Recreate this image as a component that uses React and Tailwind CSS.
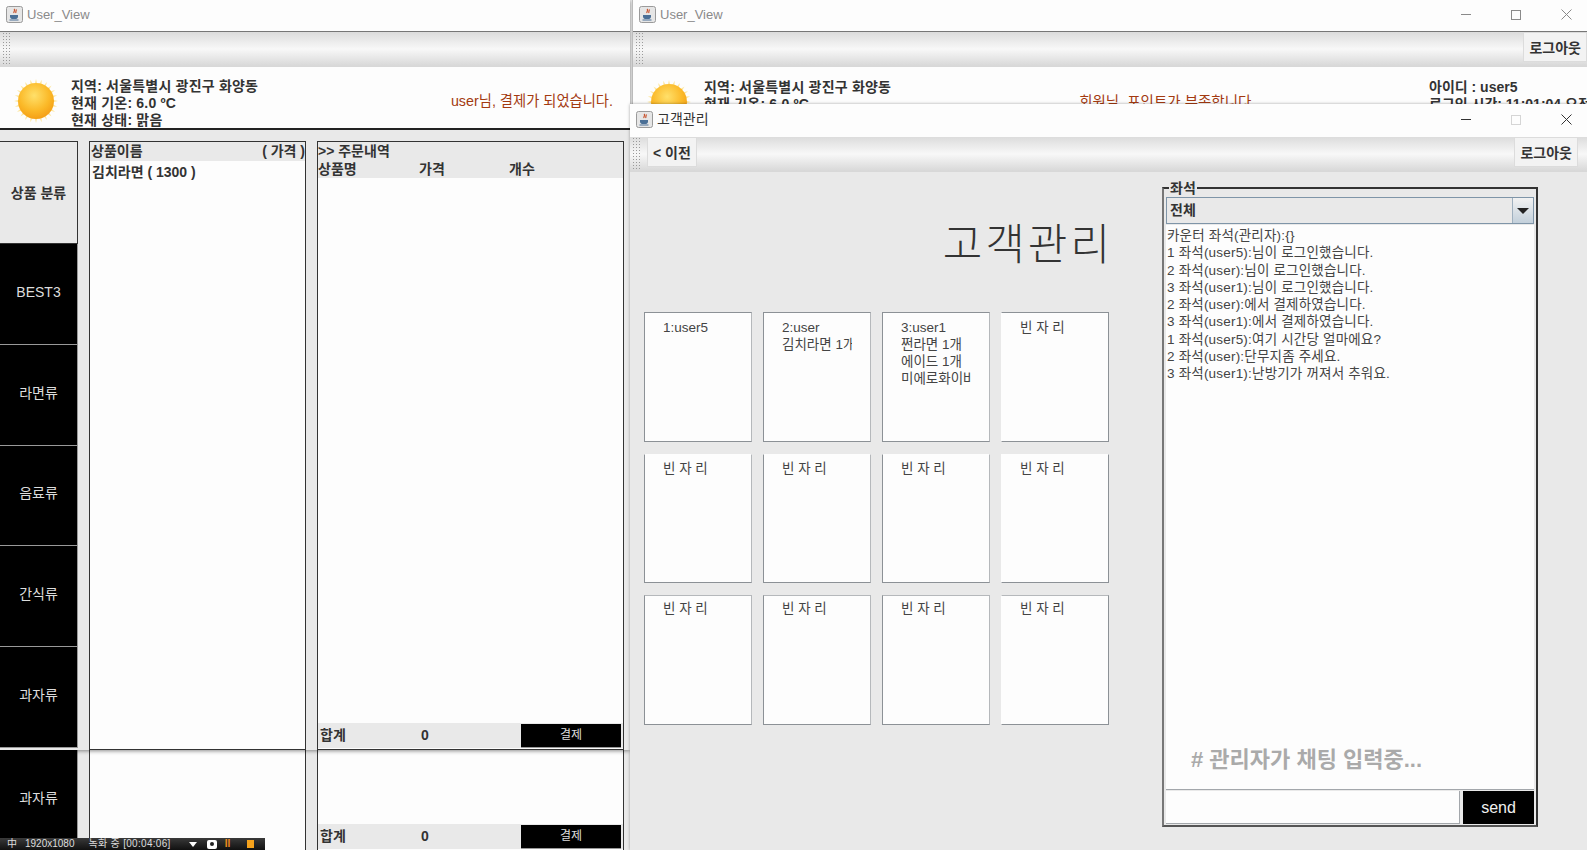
const FONT = "font-['Liberation_Sans','Noto_Sans_CJK_KR',sans-serif]";

const categories = ["BEST3", "라면류", "음료류", "간식류", "과자류"];

const chatLog = [
  "카운터 좌석(관리자):{}",
  "1 좌석(user5):님이 로그인했습니다.",
  "2 좌석(user):님이 로그인했습니다.",
  "3 좌석(user1):님이 로그인했습니다.",
  "2 좌석(user):에서 결제하였습니다.",
  "3 좌석(user1):에서 결제하였습니다.",
  "1 좌석(user5):여기 시간당 얼마에요?",
  "2 좌석(user):단무지좀 주세요.",
  "3 좌석(user1):난방기가 꺼져서 추워요.",
];

const seats = [
  ["1:user5"],
  ["2:user", "김치라면 1개"],
  ["3:user1", "쩐라면 1개", "에이드 1개", "미에로화이바"],
  ["빈 자 리"],
  ["빈 자 리"],
  ["빈 자 리"],
  ["빈 자 리"],
  ["빈 자 리"],
  ["빈 자 리"],
  ["빈 자 리"],
  ["빈 자 리"],
  ["빈 자 리"],
];

function JavaIcon() {
  return (
    <svg width="17" height="17" viewBox="0 0 17 17" className="shrink-0">
      <rect x="0.5" y="0.5" width="16" height="16" rx="2" fill="#e6e6e6" stroke="#9a9a9a" />
      <path d="M8 3c2 1.500-1 2.500 0 4M10 3.500c1 1-1 2 0 3.500" stroke="#c8502a" strokeWidth="1.200" fill="none" />
      <path d="M4 9h8v1.500c0 1.500-1 2.500-2 2.500H6c-1 0-2-1-2-2.500z" fill="#4a6f96" />
      <path d="M3.500 14h9" stroke="#4a6f96" strokeWidth="1" />
    </svg>
  );
}

function SunIcon() {
  const rays = Array.from({ length: 24 }, (_, i) => i * 15);
  return (
    <svg width="46" height="46" viewBox="0 0 46 46" className="shrink-0 -mt-[4px]">
      <defs>
        <radialGradient id="sunCore" cx="45%" cy="35%" r="70%">
          <stop offset="0%" stopColor="#ffe06a" />
          <stop offset="60%" stopColor="#fbb928" />
          <stop offset="100%" stopColor="#f39a12" />
        </radialGradient>
      </defs>
      {rays.map((deg) => (
        <path key={deg} d="M23 1l1.500 6h-3z" fill="#fde7a0" transform={`rotate(${deg} 23 23)`} />
      ))}
      <circle cx="23" cy="23" r="18" fill="url(#sunCore)" />
    </svg>
  );
}

function TitleBar({ title, dark, controls, disabledMax, tall }) {
  return (
    <div className={`${tall ? "h-[33px]" : "h-[31px]"} bg-[#fdfdfd] flex items-center pl-[6px] pb-[2px] shrink-0`}>
      <JavaIcon />
      <span className={`ml-[4px] ${dark ? "text-[14px] text-[#333]" : "text-[13px] text-[#8a8a8a]"}`}>{title}</span>
      {controls && (
        <div className={`ml-auto flex items-center gap-[40px] pr-[15px] ${dark ? "text-[#333]" : "text-[#8a8a8a]"}`}>
          <span className="w-[10px] h-px bg-current" />
          <span className={`w-[10px] h-[10px] border ${disabledMax ? "border-[#d5d5d5]" : "border-current"}`} />
          <svg width="11" height="11" viewBox="0 0 11 11" stroke="currentColor" fill="none">
            <path d="M.5.500l10 10M10.500.500l-10 10" />
          </svg>
        </div>
      )}
    </div>
  );
}

function ToolbarButton({ children }) {
  return (
    <button className="h-[30px] px-[5px] pt-[3px] bg-[#f3f3f3] border border-[#dcdcdc] text-[14px] font-bold text-[#333] whitespace-nowrap">
      {children}
    </button>
  );
}

function Toolbar({ left, right }) {
  return (
    <div className="h-[35px] shrink-0 flex items-start bg-gradient-to-b from-[#dcdcdc] via-[#f8f8f8] to-[#d8d8d8] border-b border-[#d8d8d8]">
      <div className="w-[9px] h-full ml-[2px] bg-[radial-gradient(#9a9a9a_1px,transparent_1px)] bg-[length:3px_3px]" />
      {left}
      <div className="ml-auto flex">{right}</div>
    </div>
  );
}

function WeatherInfo() {
  return (
    <div className="flex items-center gap-[12px] pl-[13px] shrink-0">
      <SunIcon />
      <div className="text-[14px] tracking-[0.2px] leading-[17px] font-bold text-[#333]">
        <div>지역: 서울특별시 광진구 화양동</div>
        <div>현재 기온: 6.0 ºC</div>
        <div>현재 상태: 맑음</div>
      </div>
    </div>
  );
}

function OrderFooter() {
  return (
    <div className="h-[25px] mb-px bg-[#e9e9e9] flex items-center px-[2px]">
      <span className="w-[101px]">합계</span>
      <span>0</span>
      <button className="ml-auto w-[100px] h-[24px] bg-black border-b border-[#999] text-[#ddd] text-[12px] font-normal">
        결제
      </button>
    </div>
  );
}

function UserView() {
  return (
    <div className="flex flex-col h-full">
      <TitleBar title="User_View" />
      <div className="h-px bg-[#777]" />
      <Toolbar />
      <div className="h-[63px] bg-[#fdfdfd] border-b-2 border-[#222] flex items-center justify-between pr-[17px] pt-[11px] shrink-0">
        <WeatherInfo />
        <span className="text-[14.300px] mb-[2px] text-[#a33a10]">user님, 결제가 되었습니다.</span>
      </div>
      <div className="flex-1 min-h-0 bg-[#e9e9e9] pt-[11px] pr-[6px] flex gap-[11px] text-[14px] font-bold text-[#333]">
        <div className="w-[78px] flex flex-col pb-[2px]">
          <div className="h-[103px] border-y border-r border-[#333] flex items-center justify-center pt-[2px]">
            상품 분류
          </div>
          {categories.map((c) => (
            <div key={c} className="flex-1 bg-black border-b border-r border-[#999] flex items-center justify-center pb-[3px] font-normal text-[#ddd]">
              {c}
            </div>
          ))}
        </div>
        <div className="w-[217px] bg-[#fdfdfd] border border-[#333]">
          <div className="h-[19px] bg-[#e9e9e9] flex justify-between items-center pl-px">
            <span>상품이름</span>
            <span>( 가격 )</span>
          </div>
          <div className="pl-[2px] pt-[1px]">김치라면 ( 1300 )</div>
        </div>
        <div className="flex-1 bg-[#fdfdfd] border border-[#333] flex flex-col">
          <div className="bg-[#e9e9e9] h-[36px] leading-[18px]">
            <div>&gt;&gt; 주문내역</div>
            <div className="grid grid-cols-[101px_90px_1fr]">
              <span>상품명</span>
              <span>가격</span>
              <span>개수</span>
            </div>
          </div>
          <div className="flex-1" />
          <OrderFooter />
        </div>
      </div>
    </div>
  );
}

// 뒤에 겹친 창의 아래쪽만 보이는 부분
function UserViewBottom() {
  return (
    <div className="h-full bg-[#e9e9e9] pr-[6px] flex gap-[11px] text-[14px] font-bold text-[#333]">
      <div className="w-[78px] bg-black border-r border-[#999] flex items-center justify-center pb-[3px] font-normal text-[#ddd]">
        과자류
      </div>
      <div className="w-[217px] bg-[#fdfdfd] border-x border-[#333]" />
      <div className="flex-1 bg-[#fdfdfd] border-x border-[#333] flex flex-col justify-end">
        <OrderFooter />
      </div>
    </div>
  );
}

function BackView() {
  return (
    <div className="flex flex-col h-full bg-[#fdfdfd]">
      <TitleBar title="User_View" controls />
      <div className="h-px bg-[#777]" />
      <Toolbar right={<ToolbarButton>로그아웃</ToolbarButton>} />
      <div className="h-[63px] flex items-center pt-[11px] shrink-0 overflow-hidden">
        <WeatherInfo />
        <span className="text-[14.500px] mb-[2px] text-[#a33a10] ml-[188px] whitespace-nowrap">회원님, 포인트가 부족합니다</span>
        <div className="ml-auto text-[14px] leading-[17px] font-bold text-[#333] w-[158px] whitespace-nowrap overflow-hidden">
          <div>아이디 : user5</div>
          <div>로그인 시간: 11:01:04 오전</div>
          <div>&nbsp;</div>
        </div>
      </div>
    </div>
  );
}

function SeatCard({ lines, index }) {
  // 사진처럼 줄/칸마다 테두리가 조금씩 다름
  const top = index < 4 ? "border-t-[#8c9196] pt-[6px]" : index < 8 ? "border-t-[#fdfdfd] pt-[5px]" : "border-t-[#b5b8bb] pt-[4px]";
  const left = index % 4 === 3 ? "border-l-[#fdfdfd]" : "border-l-[#8c9196]";
  const right = index % 4 === 3 ? "border-r-[#8c9196]" : "border-r-[#b5b8bb]";
  return (
    <div className={`bg-[#fdfdfd] border border-b-[#8c9196] ${top} ${left} ${right} text-[13.500px] leading-[17px] text-[#444]`}>
      <div className="mx-[18px] overflow-hidden whitespace-nowrap">
        {lines.map((l) => (
          <div key={l}>{l}</div>
        ))}
      </div>
    </div>
  );
}

function SeatsPanel() {
  return (
    <div className="relative w-[376px] h-[640px] border-2 border-[#333] border-l-[#777] border-b-[#555] flex flex-col pt-[8px] px-[2px] pb-[1px]">
      <span className="absolute left-[5px] -top-[9px] bg-[#e9e9e9] px-[1px] text-[14px] font-bold leading-[16px] text-[#333]">좌석</span>
      <div className="h-[27px] shrink-0 border border-[#7f95a8] bg-[#e9e9e9] flex items-center">
        <span className="pl-[3px] text-[14px] font-bold text-[#333]">전체</span>
        <div className="ml-auto w-[21px] h-full border-l border-[#9fb0bf] bg-gradient-to-b from-[#f2f2f2] to-[#c3d0db] flex items-center justify-center">
          <span className="w-0 h-0 border-x-[6px] border-x-transparent border-t-[6px] border-t-[#222]" />
        </div>
      </div>
      <div className="flex-1 min-h-0 bg-[#fdfdfd] border-b border-[#a3a7ab] flex flex-col justify-between mt-px">
        <div className="pl-px pt-[2px] text-[13.500px] tracking-[0.2px] leading-[17.300px] text-[#444]">
          {chatLog.map((l) => (
            <div key={l}>{l}</div>
          ))}
        </div>
        <div className="pl-[25px] pb-[15px] text-[22px] leading-[28px] font-bold text-[#aaaaaa]"># 관리자가 채팅 입력중...</div>
      </div>
      <div className="h-[33px] shrink-0 flex gap-[3px] mt-px">
        <div className="w-[294px] bg-[#fdfdfd] border-b border-r border-[#a3a7ab]" />
        <button className="w-[71px] bg-black text-[#f0f0f0] text-[16px]">send</button>
      </div>
    </div>
  );
}

function AdminView() {
  return (
    <div className="flex flex-col h-full">
      <TitleBar title="고객관리" dark controls disabledMax tall />
      <Toolbar
        left={<div className="ml-[6px]"><ToolbarButton>&lt; 이전</ToolbarButton></div>}
        right={<div className="pr-[9px]"><ToolbarButton>로그아웃</ToolbarButton></div>}
      />
      <div className="flex-1 min-h-0 bg-[#e9e9e9] flex pl-[14px] pt-[15px]">
        <div className="w-[465px] flex flex-col">
          <h1 className="h-[125px] pt-[33px] -mr-[4px] text-right text-[43px] leading-[50px] tracking-[3px] font-light text-[#333]">고객관리</h1>
          <div className="grid grid-cols-4 grid-rows-3 gap-x-[11px] gap-y-[12px] h-[413px]">
            {seats.map((lines, i) => (
              <SeatCard key={i} index={i} lines={lines} />
            ))}
          </div>
        </div>
        <div className="ml-[53px]">
          <SeatsPanel />
        </div>
      </div>
    </div>
  );
}

export default function App() {
  return (
    <div className={`relative w-[1587px] h-[850px] overflow-hidden bg-[#e9e9e9] ${FONT}`}>
      {/* 왼쪽 창 두 개 겹침 */}
      <div className="absolute left-0 top-[750px] w-[630px] h-[100px]">
        <UserViewBottom />
      </div>
      <div className="absolute left-0 top-0 w-[630px] h-[750px] shadow-[0_1px_4px_rgba(0,0,0,0.45)]">
        <UserView />
      </div>
      <div className="absolute left-[632px] top-0 right-0 h-[200px] border-l border-[#bbb]">
        <BackView />
      </div>
      <div className="absolute left-[630px] top-[104px] right-0 bottom-0 shadow-[0_0_3px_rgba(0,0,0,0.35)]">
        <AdminView />
      </div>
      {/* 녹화 바 */}
      <div className="absolute left-0 bottom-0 w-[265px] h-[12px] bg-gradient-to-b from-[#3a3a3a] to-[#111] flex items-center text-[10px] leading-[12px] text-[#ddd] overflow-hidden">
        <span className="pl-[7px] w-[25px]">中</span>
        <span>1920x1080</span>
        <span className="ml-[14px] tracking-[0.3px]">녹화 중 [00:04:06]</span>
        <span className="ml-[18px] w-0 h-0 border-x-[4px] border-x-transparent border-t-[5px] border-t-white" />
        <span className="ml-[10px] w-[10px] h-[9px] rounded-[2px] bg-white flex items-center justify-center">
          <span className="w-[4px] h-[4px] rounded-full bg-[#222]" />
        </span>
        <span className="ml-[8px] text-[#f08a1c] font-bold">II</span>
        <span className="ml-[17px] w-[7px] h-[8px] bg-[#f5a21c]" />
      </div>
    </div>
  );
}
